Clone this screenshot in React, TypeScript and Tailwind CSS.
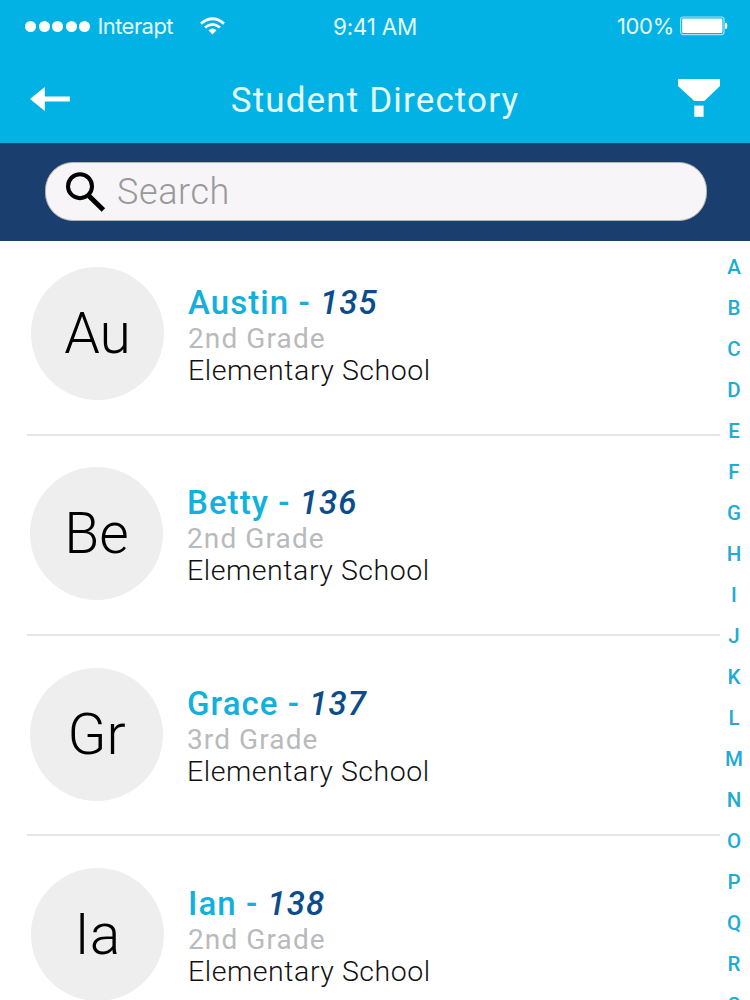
import React from 'react';
import clsx from 'clsx';

interface Student {
  id: number;
  name: string;
  initials: string;
  grade: string;
  school: string;
}

const STUDENTS: Student[] = [
  { id: 135, name: 'Austin', initials: 'Au', grade: '2nd Grade', school: 'Elementary School' },
  { id: 136, name: 'Betty', initials: 'Be', grade: '2nd Grade', school: 'Elementary School' },
  { id: 137, name: 'Grace', initials: 'Gr', grade: '3rd Grade', school: 'Elementary School' },
  { id: 138, name: 'Ian', initials: 'Ia', grade: '2nd Grade', school: 'Elementary School' },
];

const LETTERS = 'ABCDEFGHIJKLMNOPQRS'.split('');

// Per-row spacing, the first row sits closer to the search bar
const ROW_STYLES = [
  'h-[195px] pt-[26px] pl-[4px] border-b-2',
  'h-[200px] pt-[31px] pl-[3px] border-b-2',
  'h-[200px] pt-[32px] pl-[3px] border-b-2',
  'h-[200px] pt-[32px] pl-[4px] border-b-2',
];

const WifiIcon = () => (
  <svg width="25" height="18" viewBox="0 0 26 18" fill="none" stroke="#fff" strokeWidth="2.8">
    <path d="M1 6.5 Q13 -3.6 25 6.5" />
    <path d="M5.2 10.6 Q13 4 20.8 10.6" />
    <path d="M8.8 13.4 Q13 10 17.2 13.4 L13 17.8 Z" fill="#fff" stroke="none" />
  </svg>
);

const BatteryIcon = () => (
  <svg width="48" height="20" viewBox="0 0 48 20">
    <rect x="0.6" y="1" width="43.4" height="17.6" rx="2.5" fill="none" stroke="#a5e3f5" strokeWidth="1.2" />
    <rect x="2.2" y="2.6" width="40.2" height="14.4" rx="1" fill="#fff" />
    <path d="M45 6.8 H46 Q47.2 6.8 47.2 8 V11.6 Q47.2 12.8 46 12.8 H45 Z" fill="#fff" />
  </svg>
);

const StatusBar = () => (
  <div className="grid h-[52px] grid-cols-3 items-center pl-[25px] pr-[22px] font-['Inter',sans-serif] text-[22px] text-[#e4fbff]">
    <div className="flex items-center">
      <div className="flex gap-[2.6px]">
        {[0, 1, 2, 3, 4].map(dot => <span key={dot} className="size-[11px] rounded-full bg-white" />)}
      </div>
      <span className="ml-[7px] tracking-[-0.55px]">Interapt</span>
      <span className="ml-[27px]"><WifiIcon /></span>
    </div>
    <div className="pr-[3px] pt-px text-center text-[22.5px] tracking-[-0.25px]">9:41 AM</div>
    <div className="flex items-center justify-end gap-[6px]">
      <span className="tracking-[-0.3px]">100%</span>
      <BatteryIcon />
    </div>
  </div>
);

const Header = () => (
  <header className="h-[143px] bg-[#02b2e4]">
    <StatusBar />
    <div className="flex h-[91px] items-center justify-between pl-[30px] pr-[30px]">
      <button aria-label="Back" className="mt-[3px]">
        <svg width="42" height="24" viewBox="0 0 42 24" fill="#fff">
          <path d="M0 12 L14.8 0 V9.6 H39.8 V14.4 H14.8 V24 Z" />
        </svg>
      </button>
      <h1 className="mt-[6px] text-[35px] leading-10 tracking-[1.15px] text-[#e4fbff]">Student Directory</h1>
      <button aria-label="Filter" className="mt-px">
        <svg width="42" height="38" viewBox="0 0 42 38" fill="#fff">
          <path d="M0 0 H42 V7 L26.3 22 H16.3 L0 7 Z" />
          <path d="M16.3 26.6 H25.6 V37.8 H16.3 Z" />
        </svg>
      </button>
    </div>
  </header>
);

const SearchBar = () => (
  <div className="flex h-[98px] items-start bg-[#1a3e6e] pt-[19px] pl-[45px] pr-[43px]">
    <div className="flex h-[59px] w-full items-center rounded-[28px] border border-[#b4b2b2] bg-[#f7f5f8] pl-5">
      <svg width="40" height="40" viewBox="0 0 40 40" fill="none" stroke="#000">
        <circle cx="14" cy="14.2" r="12" strokeWidth="4" />
        <path d="M23 24 L37.4 38" strokeWidth="5" />
      </svg>
      <span className="ml-[11px] pt-px text-[36px] font-light tracking-[0.6px] text-[#999]">Search</span>
    </div>
  </div>
);

const StudentRow = ({ student, className }: { student: Student; className: string }) => (
  <li className={clsx('flex shrink-0 items-start border-[#e6e6e6]', className)}>
    <div className="flex size-[133px] items-center justify-center rounded-full bg-[#efeeef] pt-px text-[57px] font-light text-black">
      {student.initials}
    </div>
    <div className="ml-[24px] pt-[18px]">
      <h2 className="h-[38px] text-[33px] leading-9 font-medium tracking-[1.05px] text-[#12b0dc]">
        {student.name} - <em className="text-[#0b4c8c]">{student.id}</em>
      </h2>
      <p className="text-[28px] leading-8 tracking-[1.1px] text-[#b9babc]">{student.grade}</p>
      <p className="text-[28.5px] leading-8 font-light tracking-[0.55px] text-[#111]">{student.school}</p>
    </div>
  </li>
);

const App: React.FC = () => {
  return (
    <div className="flex h-[1000px] w-[750px] flex-col overflow-hidden bg-white font-['Roboto',sans-serif]">
      <Header />
      <SearchBar />
      <main className="flex h-[759px] overflow-hidden">
        <ul className="ml-[27px] flex w-[693px] flex-col">
          {STUDENTS.map((student, i) => <StudentRow key={student.id} student={student} className={ROW_STYLES[i]} />)}
        </ul>
        <nav className="ml-[-1px] flex w-[30px] flex-col pt-[6px] text-center text-[20.5px] font-medium text-[#1fabd3]">
          {LETTERS.map(letter => <a key={letter} className="h-[41px] shrink-0 leading-[41px]">{letter}</a>)}
        </nav>
      </main>
    </div>
  );
};

export default App;
